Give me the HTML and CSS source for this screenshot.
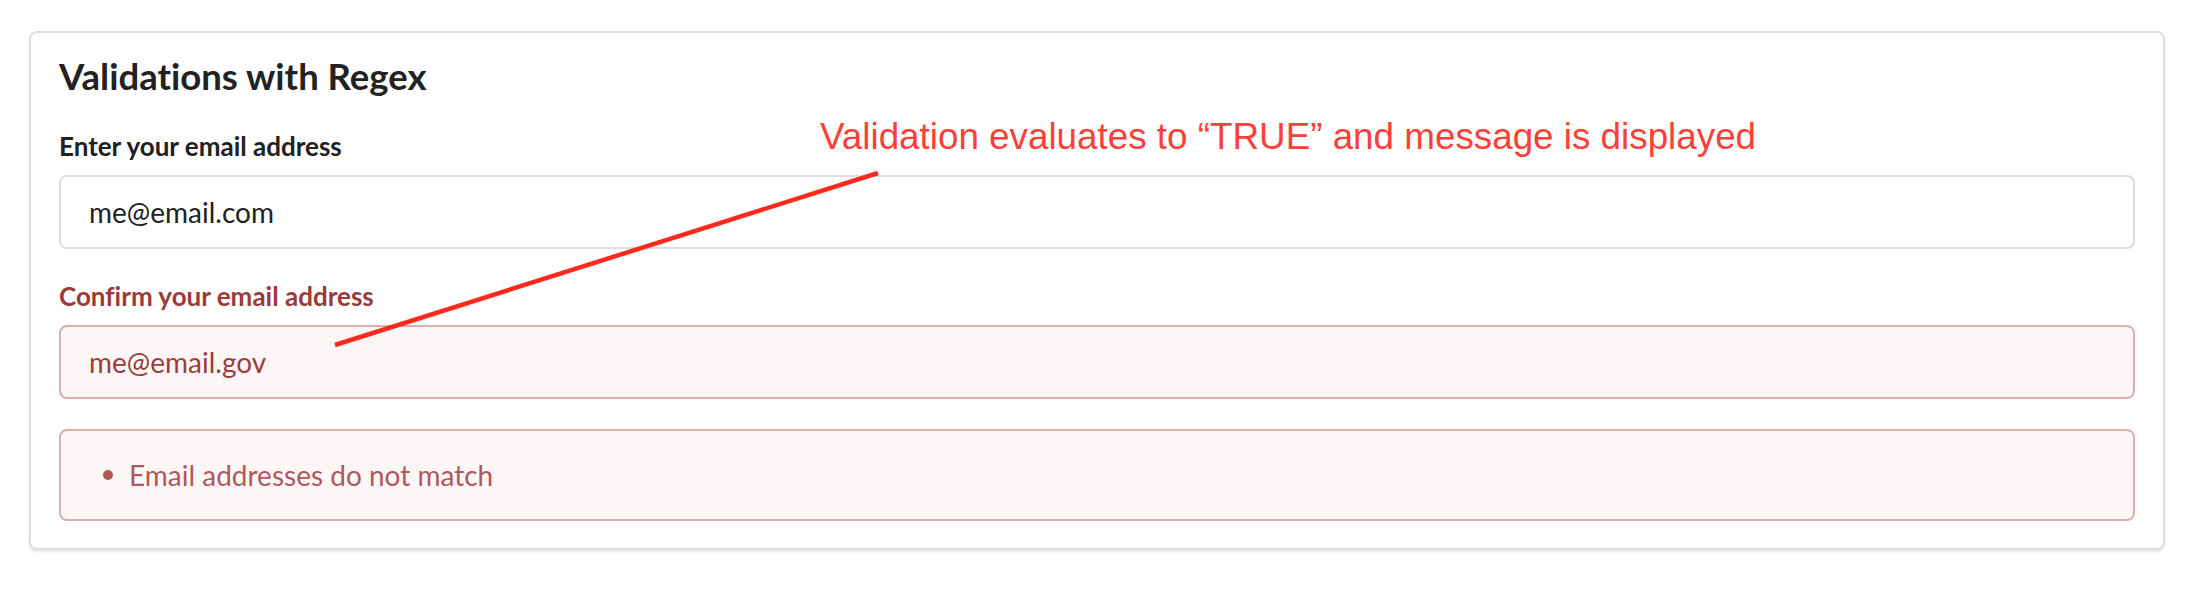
FILE: index.html
```html
<!DOCTYPE html>
<html lang="en">
<head>
<meta charset="utf-8">
<title>Validations with Regex</title>
<link rel="stylesheet" href="styles.css">
</head>
<body>
<div class="page">
  <section class="card">
    <h2 class="title">Validations with Regex</h2>
    <div class="field">
      <label class="label" for="email">Enter your email address</label>
      <input class="input" id="email" type="text" value="me@email.com">
    </div>
    <div class="field field-error">
      <label class="label" for="confirm">Confirm your email address</label>
      <input class="input" id="confirm" type="text" value="me@email.gov">
    </div>
    <div class="errors">
      <ul class="error-list">
        <li class="error-item">Email addresses do not match</li>
      </ul>
    </div>
  </section>
  <p class="annotation-text">Validation evaluates to “TRUE” and message is displayed</p>
  <svg class="annotation-line" width="2190" height="592" viewBox="0 0 2190 592">
    <line x1="335" y1="345" x2="878" y2="173" stroke="#fb2a1e" stroke-width="4.5"/>
  </svg>
</div>
</body>
</html>
```

FILE: styles.css
```css
* { box-sizing: border-box; }

html, body {
  margin: 0;
  padding: 0;
  background: #ffffff;
}

body {
  font-family: Lato, "Open Sans", sans-serif;
  color: #222222;
  font-variant-ligatures: none;
}

.page {
  position: relative;
  width: 2190px;
  height: 592px;
  padding: 31px 25px 0 29px;
}

.card {
  width: 2136px;
  border: 2px solid #dedede;
  border-radius: 8px;
  padding: 0 28px 27px;
  background: #ffffff;
  box-shadow: 0 2px 3px rgba(0, 0, 0, 0.10);
}

.title {
  margin: 20px 0 0;
  font-size: 36.5px;
  line-height: 46px;
  font-weight: 700;
  color: #222222;
}

.field {
  display: flex;
  flex-direction: column;
}

.label {
  margin: 32px 0 14px;
  font-size: 26px;
  line-height: 30px;
  font-weight: 700;
  color: #212121;
}

.input {
  width: 100%;
  height: 74px;
  border: 2px solid #dedede;
  border-radius: 8px;
  padding: 0 28px;
  font-family: Lato, "Open Sans", sans-serif;
  font-variant-ligatures: none;
  font-size: 28px;
  color: #222222;
  background: #ffffff;
  outline: none;
}

.field-error .label {
  color: #9a3a3a;
}

.field-error .input {
  border-color: #dcaeae;
  background: #fdf6f6;
  color: #9c3c3c;
}

.errors {
  margin-top: 30px;
  border: 2px solid #dcaeae;
  border-radius: 8px;
  background: #fdf6f6;
  padding: 27px 0 27px 42px;
}

.error-list {
  margin: 0;
  padding: 0;
  list-style: none;
}

.error-item {
  display: flex;
  align-items: center;
  gap: 16px;
  font-size: 28px;
  line-height: 34px;
  color: #b0585b;
}

.error-item::before {
  content: "";
  width: 10px;
  height: 10px;
  border-radius: 50%;
  background: #b0585b;
  flex: none;
}

.annotation-text {
  position: absolute;
  left: 820px;
  top: 119px;
  margin: 0;
  font-family: "Liberation Sans", Arial, sans-serif;
  font-size: 36.8px;
  line-height: 36.5px;
  color: #fc4038;
  white-space: nowrap;
}

.annotation-line {
  position: absolute;
  left: 0;
  top: 0;
  pointer-events: none;
}
```
